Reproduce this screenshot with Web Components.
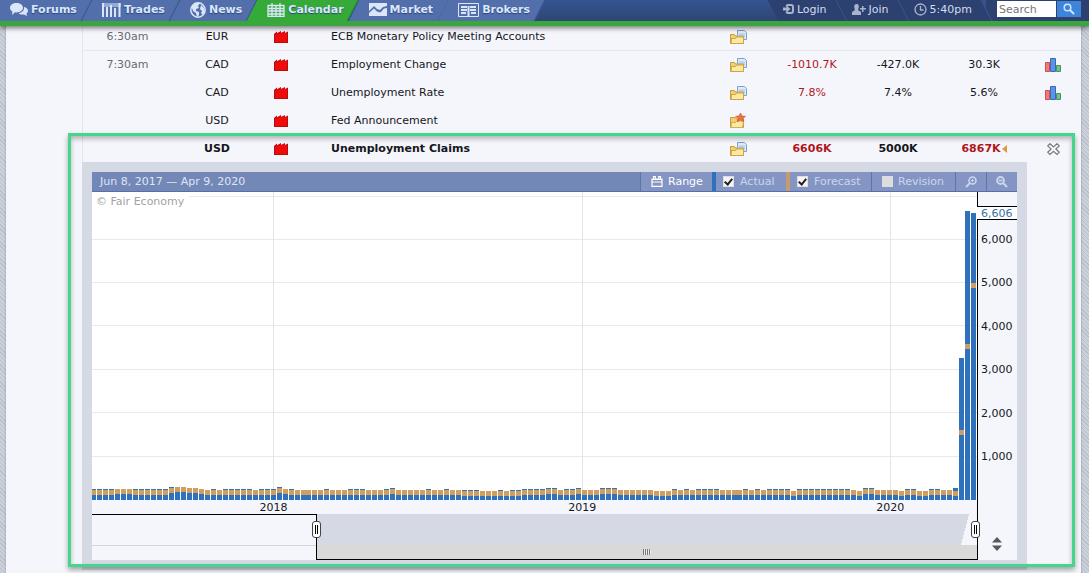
<!DOCTYPE html>
<html lang="en">
<head>
<meta charset="utf-8">
<meta name="viewport" content="width=device-width, initial-scale=1">
<title>Economic Calendar</title>
<style>
  html { height: 100%; }
  body {
    margin: 0;
    min-height: 100%;
    font: 11px/14px "DejaVu Sans", Verdana, sans-serif;
    color: #16161c;
    background: repeating-linear-gradient(45deg, #b9c0cc 0 1px, #cbd0da 1px 3px);
  }
</style>
</head>
<body>
<fx-page></fx-page>
<script>
const ICONS = {
  chat: [18, 13, '<path fill="currentColor" d="M6.500 0C10 0 13 2 13 4.700S10 9.400 6.500 9.400L5 9.300 2 12 2.400 8.500C1 7.700 0 6.300 0 4.700 0 2 3 0 6.500 0z"/><path fill="currentColor" d="M14 4C16.500 4.500 18 6 18 7.800 18 9 17.300 10 16.400 10.600L17 13 14 11.400C11.500 11.700 9.500 11 8.500 10.200 12 9.800 14.400 7.600 14 4z"/>'],
  trades: [19, 14, '<path fill="none" stroke="currentColor" stroke-width="2" d="M1 0v14M5 4v10M9 2v12M13 5v9M17.500 0v14"/><path stroke="currentColor" d="M0 1h19M0 3h19"/>'],
  globe: [16, 16, '<circle cx="8" cy="8" r="7.200" fill="none" stroke="currentColor" stroke-width="1.500"/><path fill="currentColor" d="M2 4l4-3 4 0-2 3 1 2-3 1 0 2 3 1 0 3-2 2-1-4-3-2-1-3zM11 3l3 3 1 4-2 3-2-2 1-2-2-2z"/>'],
  calendar: [18, 14, '<path fill="none" stroke="currentColor" stroke-width="1.300" d="M1 2.500h16v11H1zM1 5.500h16M1 8h16M1 11h16M5 0v14M9 3v11M13 0v14"/>'],
  market: [18, 13, '<path fill="currentColor" d="M0 0h18v3l-4 1-3 3-3-1-3-3-5 5z"/><path fill="currentColor" d="M0 10l5-4.500 3 3 3.500 1 3.500-4 3-.5v8H0z"/>'],
  brokers: [21, 14, '<path fill="none" stroke="currentColor" d="M.5.5h20v13H.5z"/><path fill="none" stroke="currentColor" stroke-width="2" d="M3 4h6M3 7h6M3 10h5M12 4h6M12 7h6M13 10h5M10.500 3v10"/>'],
  login: [11, 11, '<path fill="none" stroke="currentColor" stroke-width="2" d="M3 2L5 1h3q2 0 2 2v4q0 2-2 2H5L3 8"/><path fill="currentColor" d="M0 3.500h3.500v-2L7.500 5 3.500 8.500v-2H0z"/>'],
  join: [14, 11, '<path fill="currentColor" d="M4.500 0c2 0 2.500 1.500 2.300 3.200L6 6l3 2v3H0V8l3-2-.8-2.800C2 1.500 2.800 0 4.500 0zM10 2h1.500v2H14v1.500h-2.500V8H10V5.500H8V4h2z"/>'],
  clock: [13, 13, '<circle cx="6.500" cy="6.500" r="5.500" fill="none" stroke="currentColor" stroke-width="1.300"/><path fill="none" stroke="currentColor" stroke-width="1.300" d="M6.500 3v4H9.500"/>'],
  search: [12, 12, '<circle cx="4.500" cy="4.500" r="3.300" fill="none" stroke="currentColor" stroke-width="1.500"/><path stroke="currentColor" stroke-width="2" d="M7 7l4 4"/>'],
  zoomin: [12, 12, '<circle cx="7.500" cy="4.500" r="3.500" fill="none" stroke="currentColor" stroke-width="1.600"/><path stroke="currentColor" stroke-width="2" d="M5 7l-4 4"/><path stroke="currentColor" d="M6 4.500h3M7.500 3v3"/>'],
  zoomout: [12, 12, '<circle cx="4.500" cy="4.500" r="3.500" fill="none" stroke="currentColor" stroke-width="1.800"/><path stroke="currentColor" stroke-width="2.200" d="M7 7l4 4"/><path stroke="currentColor" stroke-width="1.600" d="M2.500 4.500h4"/>'],
  range: [12, 11, '<path fill="none" stroke="currentColor" stroke-width="1.200" d="M1 2.500v7.900h10V2.500M1 6h10M2.500 3V.6h1.800V3h3.400V.6h1.800V3"/><path stroke="currentColor" d="M1 3.500h10"/>'],
  impact: [14, 12, '<path fill="#b50e0e" d="M0 3l3-2.500v1.700L7 0v2l4-2v2l3-1.500V12H0z"/><path fill="#f00a0a" d="M1 4l2-1.500 1 .5 3-1.500 1 .5L11 1v1.500l2-.7V11H1z"/>'],
  folder: [17, 16, '<path fill="#dcecfb" stroke="#7d9fc9" d="M7.500 1.500h7l2 2v7h-9z"/><path fill="#b9d7f4" d="M9 4h6v5H9z"/><path fill="#f4d06a" stroke="#c79a43" d="M.5 5.500h4l1 1.500h8v7.500H.5z"/><path fill="#fbe9a4" stroke="#cda24a" d="M1.500 9.500h4l1-1.500h7v6.500H1z"/>'],
  special: [17, 16, '<path fill="#f4d06a" stroke="#c79a43" d="M.5 4.500h5l1 1.500h7v8.500H.5z"/><path fill="#fbe9a4" stroke="#d6ad55" d="M1.500 9.500h4l1-1.500h7l-1 6.500H1z"/><path fill="#e8743c" stroke="#c8552e" stroke-width=".6" d="M10.500 0l1.500 3 3.500.3-2.500 2.200.9 3.200-3.400-1.600-3.200 1.600.8-3.200-2.500-2.200 3.400-.3z"/>'],
  graph: [16, 15, '<path fill="#ee7b7b" stroke="#cf4d55" d="M.5 4.500h4v9h-4z"/><path fill="#5b94e2" stroke="#3869b8" d="M5.500.5h5v13h-5z"/><path fill="#72c08a" stroke="#459463" d="M11.500 7.500h4v6h-4z"/>'],
  close: [13, 12, '<path fill="#f8f8f8" stroke="#77797e" stroke-width="1.200" d="M3 .7L6.500 4 10 .7l2.300 2.200L8.800 6l3.500 3.200L10 11.400 6.500 8.200 3 11.400.7 9.200 4.200 6 .7 2.900z"/>'],
  revised: [5, 8, '<path fill="#e09a3e" d="M5 0v8L0 4z"/>'],
  updown: [10, 14, '<path fill="#55585f" d="M0 5.500L5 0l5 5.500zM0 8.500h10L5 14z"/>']
};

const define = (name, html, connected) => {
  const template = document.createElement('template');
  template.innerHTML = html;
  customElements.define(name, class extends HTMLElement {
    connectedCallback() {
      if (this.shadowRoot) return;
      this.attachShadow({ mode: 'open' }).append(template.content.cloneNode(true));
      if (connected) connected.call(this, this.shadowRoot);
    }
  });
};

define('fx-icon', '<style>:host{display:inline-block;flex:none;vertical-align:middle}svg{display:block}</style><svg aria-hidden="true"></svg>', function (root) {
  const [w, h, shape] = ICONS[this.getAttribute('name')];
  const svg = root.querySelector('svg');
  svg.setAttribute('width', w);
  svg.setAttribute('height', h);
  svg.setAttribute('viewBox', `0 0 ${w} ${h}`);
  svg.innerHTML = shape;
});

define('fx-tab', `
<style>
  :host { display: block; position: relative; height: 21px; --fill: #526eab; --edge: #35508a; }
  :host::before {
    content: ""; position: absolute; inset: 0; box-sizing: border-box;
    background: var(--fill); border-right: 1px solid var(--edge); transform: skewX(-27deg);
  }
  :host([active]) { --fill: #35aa38; --edge: #2c7f45; }
  :host([first])::before { left: -20px; }
  a {
    position: relative; display: flex; align-items: center; gap: 3px; height: 19px;
    padding: 0 10px 0 15px; color: #dbe6fa; font-weight: bold; text-decoration: none;
    text-shadow: 0 1px 1px #2b457c;
  }
  :host([first]) a { padding-left: 10px; }
</style>
<a href="#"><slot name="icon"></slot><slot></slot></a>`);

define('fx-user-link', `
<style>
  :host { display: block; position: relative; height: 21px; }
  :host::before {
    content: ""; position: absolute; inset: 0; box-sizing: border-box;
    background: #2c416f; border-right: 1px solid #3f588d; transform: skewX(27deg);
  }
  a {
    position: relative; display: flex; align-items: center; gap: 3px; height: 19px;
    padding: 0 15px 0 10px; color: #d3dcef; text-decoration: none;
  }
  ::slotted(fx-icon) { color: #a8b4cd; }
</style>
<a href="#"><slot name="icon"></slot><slot></slot></a>`);

define('fx-header', `
<style>
  :host {
    display: flex; justify-content: space-between; position: sticky; top: 0; z-index: 5;
    height: 21px; border-bottom: 5px solid #39a63e;
    background: linear-gradient(#355490, #2d4674);
    box-shadow: 0 2px 5px #0008;
  }
  nav, .user { display: flex; }
  nav { overflow: hidden; padding-right: 6px; }
  form { display: flex; align-items: flex-start; background: #2c416f; padding: 1px 8px 0 11px; margin-left: -1px; }
  input {
    box-sizing: border-box; width: 59px; height: 16px; border: 0; border-radius: 0; padding: 0 2px;
    font: inherit; background: #fff; color: #444; outline: 0;
  }
  input::placeholder { color: #757575; opacity: 1; }
  form button {
    display: grid; place-items: center; width: 24px; height: 16px; padding: 0; border: 0;
    background: #3c85da; color: #cfe5ff; margin-left: 1px;
  }
</style>
<nav aria-label="Main">
  <fx-tab first><fx-icon slot="icon" name="chat"></fx-icon>Forums</fx-tab>
  <fx-tab><fx-icon slot="icon" name="trades"></fx-icon>Trades</fx-tab>
  <fx-tab><fx-icon slot="icon" name="globe"></fx-icon>News</fx-tab>
  <fx-tab active><fx-icon slot="icon" name="calendar"></fx-icon>Calendar</fx-tab>
  <fx-tab><fx-icon slot="icon" name="market"></fx-icon>Market</fx-tab>
  <fx-tab><fx-icon slot="icon" name="brokers"></fx-icon>Brokers</fx-tab>
</nav>
<div class="user">
  <fx-user-link><fx-icon slot="icon" name="login"></fx-icon>Login</fx-user-link>
  <fx-user-link><fx-icon slot="icon" name="join"></fx-icon>Join</fx-user-link>
  <fx-user-link><fx-icon slot="icon" name="clock"></fx-icon>5:40pm</fx-user-link>
  <form>
    <input type="text" placeholder="Search" aria-label="Search">
    <button type="button" aria-label="Go"><fx-icon name="search"></fx-icon></button>
  </form>
</div>`);

/* Weekly claims in thousands: one letter per week gives the forecast level,
   a capital letter an actual above the forecast. The last weeks follow as figures. */
const LEVELS = { a: 208, b: 185, c: 254, d: 277, e: 231 };
const history = 'AAAAeeeAAAAAACddcceaAaAAAAAaAAACeAaaaaaAaaaAAAaaaAEaaaaaAaaAaaBBBbbbBbBBAAAAEEaAAEaaaEEEaaaaaabbbAaAaAAAAaaaaAaAaAAAAbAAAAAAAAAabEEaaaabAAbbAAa';
const weekly = [...history].slice(0, 144).map(c => {
  const forecast = LEVELS[c.toLowerCase()];
  return [c < 'a' ? forecast + 46 : forecast, forecast];
});
while (weekly.length < 144) weekly.push([208, 208]);
weekly.push([282, 185], [3283, 1560], [6648, 3540], [6606, 4950]);

define('fx-plot', `
<style>
  :host { display: block; position: relative; background: #fff; height: 308px; }
  svg { display: block; width: 100%; height: 100%; }
  small {
    position: absolute; left: 0; top: 3px; padding: 0 5px 0 4px; background: #fff;
    font-size: 11px; line-height: 14px; color: #a2a2a2;
  }
</style>
<svg viewBox="0 0 885 308" preserveAspectRatio="none" shape-rendering="crispEdges" role="img" aria-label="Unemployment claims by week"></svg>
<small>© Fair Economy</small>`, root => {
  const y = v => Math.round(308 - v * 0.0434);
  let out = '';
  for (let v = 1000; v <= 7000; v += 1000) out += `<rect x="0" y="${y(v) - 1 + (v > 6000)}" width="885" height="1" fill="#e9e9eb"/>`;
  for (const x of [181, 490, 798]) out += `<rect x="${x}" y="0" width="1" height="308" fill="#e3e5ea"/>`;
  weekly.forEach(([actual, forecast], i) => {
    const x = Math.round(-1 + i * 5.986), top = y(actual), mark = y(forecast) - (actual > 1000 ? 2 : 1);
    out += `<rect x="${x}" y="${top}" width="5" height="${308 - top}" fill="#2e72bd"/>` +
           `<rect x="${x}" y="${mark}" width="5" height="5" fill="#d09e5e"/>`;
  });
  root.querySelector('svg').innerHTML = out;
});

define('fx-axis', `
<style>
  :host { display: flex; flex-direction: column; box-sizing: border-box; height: 308px; background: #f4f6fb; }
  .cap { height: 14px; border-left: 1px solid #000; box-sizing: border-box; }
  .now { height: 14px; line-height: 14px; box-sizing: border-box; border: solid #000; border-width: 1px 0; background: #fff; color: #3573a5; padding-left: 4px; }
  .scale {
    flex: 1; display: flex; flex-direction: column; justify-content: space-between;
    padding: 13px 0 36px 3px; border-left: 1px solid #000;
  }
</style>
<div class="cap"></div><div class="now">6,606</div>
<div class="scale"><span>6,000</span><span>5,000</span><span>4,000</span><span>3,000</span><span>2,000</span><span>1,000</span></div>`);

define('fx-navigator', `
<style>
  :host { display: grid; grid-template-columns: 224fr 661fr; height: 46px; }
  .before { border-top: 1px solid #000; display: grid; grid-template-rows: 31px 1fr; }
  .before i { border-bottom: 1px solid #d3d6e0; }
  .window { position: relative; box-sizing: border-box; border: solid #000; border-width: 0 0 1px 1px; display: grid; grid-template-rows: 31px 1fr; background: #d5d9e3; }
  .view { background: linear-gradient(105deg, #d5d9e3 50%, #f4f6fb 50%) right / 24px 100% no-repeat; }
  .bar { background: #d9d9d9; display: grid; place-items: center; padding: 0; border: 0; }
  .bar span { width: 8px; height: 6px; background: repeating-linear-gradient(90deg, #777 0 1px, #ececec 1px 2px); }
  .grip {
    position: absolute; top: 7px; box-sizing: border-box; width: 9px; height: 17px; padding: 0;
    border: 1px solid #444; border-radius: 3px;
    background: linear-gradient(90deg, #000 1px, #fff 1px 2px, #000 2px) center / 3px 9px no-repeat #fff;
  }
  .start { left: -5px; }
  .end { right: -3px; }
</style>
<div class="before"><i></i></div>
<div class="window">
  <div class="view"></div>
  <button class="bar" type="button" aria-label="Scroll range"><span></span></button>
  <button class="grip start" type="button" aria-label="Range start"></button>
  <button class="grip end" type="button" aria-label="Range end"></button>
</div>`);

define('fx-chart', `
<style>
  :host { display: block; padding: 10px; background: #d5d9e3; }
  .bar { display: flex; height: 20px; box-sizing: border-box; border-bottom: 1px solid #566fa6; background: #7488b8; color: #dde5f5; line-height: 20px; }
  .period { flex: 1; padding-left: 8px; }
  .bar button, .bar label {
    display: flex; align-items: center; box-sizing: border-box; border: 0; border-left: 1px solid #5c75aa;
    background: #8495c3; color: #c9d5ef; font: inherit; line-height: 20px; padding: 0;
  }
  .bar .range { width: 72px; padding-left: 10px; gap: 5px; color: #fff; }
  .bar .tool { width: 31px; justify-content: center; }
  .bar label { gap: 6px; padding-left: 7px; }
  .bar .actual { width: 74px; border-left: 4px solid #2e72bd; }
  .bar .forecast { width: 85px; border-left: 4px solid #c59c6b; }
  .bar .revision { width: 84px; padding-left: 10px; gap: 5px; }
  input {
    appearance: none; display: grid; place-items: center; box-sizing: border-box; flex: none;
    width: 11px; height: 11px; margin: 0; border: 1px solid #dedede; background: #f5f5f5;
  }
  input:checked::after { content: ""; width: 3px; height: 6px; margin-top: -2px; border: solid #222; border-width: 0 2px 2px 0; transform: rotate(40deg); }
  .revision input { background: #ddd; }
  .body { display: grid; grid-template-columns: 1fr 40px; background: #f4f6fb; }
  .years { position: relative; height: 14px; line-height: 16px; }
  .years span { position: absolute; top: 0; transform: translateX(-50%); }
  .line { border-left: 1px solid #000; }
  .size { border-left: 1px solid #000; display: grid; place-items: center; padding: 14px 1px 0 0; }
</style>
<div class="bar">
  <span class="period">Jun 8, 2017 — Apr 9, 2020</span>
  <button class="range" type="button"><fx-icon name="range"></fx-icon>Range</button>
  <label class="actual"><input type="checkbox" checked>Actual</label>
  <label class="forecast"><input type="checkbox" checked>Forecast</label>
  <label class="revision"><input type="checkbox">Revision</label>
  <button class="tool" type="button" aria-label="Zoom in"><fx-icon name="zoomin"></fx-icon></button>
  <button class="tool" type="button" aria-label="Zoom out"><fx-icon name="zoomout"></fx-icon></button>
</div>
<div class="body">
  <fx-plot></fx-plot>
  <fx-axis></fx-axis>
  <div class="years"><span style="left:20.5%">2018</span><span style="left:55.4%">2019</span><span style="left:90.2%">2020</span></div>
  <div class="line"></div>
  <fx-navigator></fx-navigator>
  <div class="size"><fx-icon name="updown"></fx-icon></div>
</div>`);

const rows = [
  ['6:30am', 'EUR', 'ECB Monetary Policy Meeting Accounts', 'folder', '', '', '', ''],
  ['7:30am', 'CAD', 'Employment Change', 'folder', '-1010.7K', '-427.0K', '30.3K', 'graph'],
  ['', 'CAD', 'Unemployment Rate', 'folder', '7.8%', '7.4%', '5.6%', 'graph'],
  ['', 'USD', 'Fed Announcement', 'special', '', '', '', ''],
  ['', 'USD', 'Unemployment Claims', 'folder', '6606K', '5000K', '6867K', 'close']
];

define('fx-calendar', `
<style>
  :host { display: block; position: relative; padding-left: 76px; }
  table { width: 100%; table-layout: fixed; border-collapse: separate; border-spacing: 0; }
  td { height: 28px; padding: 0; text-align: center; box-sizing: border-box; white-space: nowrap; line-height: 16px; }
  td:first-child { border-left: 1px solid #e4e6ee; color: #666a73; }
  .day td { border-bottom: 1px solid #e6e8ee; padding-top: 1px; }
  td.event { text-align: left; padding-left: 31px; }
  .worse { color: #b0161b; }
  .open td { height: 27px; font-weight: bold; }
  .open .last fx-icon { margin-left: 1px; }
  td.tool { padding-right: 2px; }
  td.panel { border: 0; text-align: left; color: inherit; line-height: 14px; }
  button { border: 0; padding: 0; background: none; display: block; margin: 0 auto; }
  td > fx-icon { display: inline-block; }
  .pick {
    position: absolute; inset: 110px 6px 3px 62px; border: 3px solid #45d58c; pointer-events: none;
    box-shadow: 0 3px 5px #0005, inset 0 3px 5px #0004;
  }
</style>
<table aria-label="Economic events">
  <colgroup><col style="width:90px"><col style="width:90px"><col style="width:38px"><col><col style="width:62px"><col style="width:86px"><col style="width:86px"><col style="width:86px"><col style="width:54px"></colgroup>
  <tbody></tbody>
</table>
<div class="pick"></div>`, root => {
  const body = root.querySelector('tbody');
  body.innerHTML = rows.map(([time, cur, event, doc, act, fc, prev, tool], i) => `
    <tr class="${i === 0 ? 'day' : i === 4 ? 'open' : ''}">
      <td>${time}</td><td>${cur}</td><td><fx-icon name="impact"></fx-icon></td>
      <td class="event">${event}</td>
      <td><button type="button" aria-label="Detail"><fx-icon name="${doc}"></fx-icon></button></td>
      <td class="worse">${act}</td><td>${fc}</td>
      <td class="last${i === 4 ? ' worse' : ''}">${prev}${i === 4 ? '<fx-icon name="revised"></fx-icon>' : ''}</td>
      <td class="tool">${tool ? `<button type="button" aria-label="Graph"><fx-icon name="${tool}"></fx-icon></button>` : ''}</td>
    </tr>`).join('') + '<tr><td class="panel" colspan="8"><fx-chart></fx-chart></td><td></td></tr>';
});

define('fx-page', `
<style>
  :host { display: block; }
  main { margin: -3px 8px 0 6px; min-height: calc(100vh - 23px); background: #f4f6fb; box-shadow: 0 0 2px #8c94a4; }
</style>
<fx-header></fx-header>
<main><fx-calendar></fx-calendar></main>`);
</script>
</body>
</html>
